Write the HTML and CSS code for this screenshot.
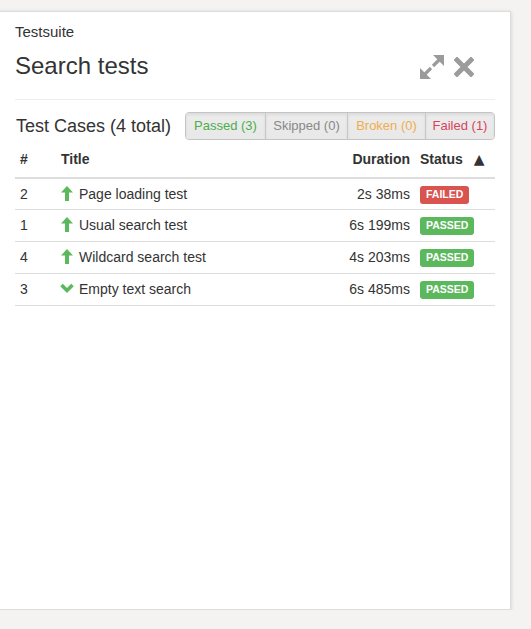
FILE: index.html
```html
<!DOCTYPE html>
<html>
<head>
<meta charset="utf-8">
<link rel="stylesheet" href="styles.css">
</head>
<body>
<div class="panel">
  <div class="head">
    <div class="head-text">
      <div class="suite">Testsuite</div>
      <div class="title">Search tests</div>
    </div>
    <div class="head-icons">
      <svg class="ic-expand" width="24" height="24" viewBox="0 0 24 24">
        <polygon points="13,0 24,0 24,11" fill="#9b9b9b"/>
        <line x1="19.5" y1="4.5" x2="13" y2="11" stroke="#9b9b9b" stroke-width="3.2"/>
        <polygon points="0,13 0,24 11,24" fill="#9b9b9b"/>
        <line x1="4.5" y1="19.5" x2="11" y2="13" stroke="#9b9b9b" stroke-width="3.2"/>
      </svg>
      <svg class="ic-close" width="20" height="20" viewBox="0 0 20 20">
        <path d="M3 3 L17 17 M17 3 L3 17" stroke="#9b9b9b" stroke-width="5" stroke-linecap="square"/>
      </svg>
    </div>
  </div>
  <div class="sep"></div>
  <div class="toolbar">
    <div class="tc-title">Test Cases (4 total)</div>
    <div class="btn-group">
      <span class="btn passed">Passed (3)</span>
      <span class="btn skipped">Skipped (0)</span>
      <span class="btn broken">Broken (0)</span>
      <span class="btn failed">Failed (1)</span>
    </div>
  </div>
  <table class="tbl">
    <thead>
      <tr>
        <th class="c-num">#</th>
        <th class="c-title">Title</th>
        <th class="c-dur">Duration</th>
        <th class="c-status">Status <span class="sort">▲</span></th>
      </tr>
    </thead>
    <tbody>
      <tr>
        <td class="c-num">2</td>
        <td class="c-title"><svg class="arrow" width="12" height="15" viewBox="0 0 12 15"><polygon points="6,0 12,6.5 8,6.5 8,15 4,15 4,6.5 0,6.5" fill="#5cb85c"/></svg>Page loading test</td>
        <td class="c-dur">2s 38ms</td>
        <td class="c-status"><span class="label l-failed">FAILED</span></td>
      </tr>
      <tr>
        <td class="c-num">1</td>
        <td class="c-title"><svg class="arrow" width="12" height="15" viewBox="0 0 12 15"><polygon points="6,0 12,6.5 8,6.5 8,15 4,15 4,6.5 0,6.5" fill="#5cb85c"/></svg>Usual search test</td>
        <td class="c-dur">6s 199ms</td>
        <td class="c-status"><span class="label l-passed">PASSED</span></td>
      </tr>
      <tr>
        <td class="c-num">4</td>
        <td class="c-title"><svg class="arrow" width="12" height="15" viewBox="0 0 12 15"><polygon points="6,0 12,6.5 8,6.5 8,15 4,15 4,6.5 0,6.5" fill="#5cb85c"/></svg>Wildcard search test</td>
        <td class="c-dur">4s 203ms</td>
        <td class="c-status"><span class="label l-passed">PASSED</span></td>
      </tr>
      <tr>
        <td class="c-num">3</td>
        <td class="c-title"><svg class="chev" width="14" height="15" viewBox="0 0 14 15"><polyline points="1.5,4 7,9.5 12.5,4" fill="none" stroke="#5cb85c" stroke-width="3.6"/></svg>Empty text search</td>
        <td class="c-dur">6s 485ms</td>
        <td class="c-status"><span class="label l-passed">PASSED</span></td>
      </tr>
    </tbody>
  </table>
</div>
</body>
</html>
```

FILE: styles.css
```css
html, body {
  margin: 0;
  padding: 0;
}
body {
  background: #f4f3f1;
  font-family: "Liberation Sans", Arial, sans-serif;
  color: #333;
  font-size: 14px;
  line-height: 20px;
}
.panel {
  box-sizing: border-box;
  margin: 11px 0 0 -1px;
  width: 512px;
  height: 599px;
  background: #fff;
  border: 1px solid #dcdcdc;
  box-shadow: 0 1px 4px rgba(0, 0, 0, 0.15);
  padding: 10px 15px 0 15px;
}
.head {
  display: flex;
  justify-content: space-between;
  align-items: flex-start;
}
.suite {
  font-size: 15px;
  line-height: 20px;
}
.title {
  font-size: 24px;
  line-height: 30px;
  margin-top: 9px;
}
.head-icons {
  display: flex;
  align-items: flex-start;
  gap: 10px;
  margin-top: 33px;
  margin-right: 21px;
}
.ic-close {
  margin-top: 2px;
}
.sep {
  height: 1px;
  background: #eee;
  margin-top: 18px;
}
.toolbar {
  display: flex;
  align-items: center;
  margin-top: 12px;
  height: 28px;
}
.tc-title {
  font-size: 18px;
  line-height: 28px;
  margin-left: 1px;
  width: 169px;
  white-space: nowrap;
}
.btn-group {
  display: flex;
  border: 1px solid #c4c4c4;
  border-radius: 4px;
  overflow: hidden;
  height: 26px;
}
.btn {
  font-size: 13px;
  line-height: 26px;
  padding: 0;
  white-space: nowrap;
  background: linear-gradient(#ececec, #e8e8e8);
  box-shadow: inset 0 2px 3px rgba(0, 0, 0, 0.07);
  border-left: 1px solid #c8c8c8;
  box-sizing: border-box;
  text-align: center;
}
.btn:first-child {
  border-left: 0;
}
.passed { color: #4cae4c; width: 79px; }
.skipped { color: #888; width: 82px; }
.broken { color: #f0ad4e; width: 78px; }
.failed { color: #d9435a; width: 69px; }

.tbl {
  width: 480px;
  border-collapse: collapse;
  margin-top: 1px;
}
.tbl th {
  font-weight: bold;
  text-align: left;
  padding: 8px 5px;
  border-bottom: 2px solid #ddd;
  height: 20px;
  white-space: nowrap;
}
.tbl td {
  padding: 5px 5px 6px 5px;
  border-bottom: 1px solid #ddd;
  height: 20px;
  white-space: nowrap;
}
.tbl tbody tr:first-child td {
  padding-bottom: 5px;
}
.c-num { width: 31px; }
.c-dur { text-align: right; width: 90px; }
.tbl th.c-dur { text-align: right; }
.c-status { width: 70px; }
.sort {
  font-family: "DejaVu Sans", sans-serif;
  font-size: 14px;
  margin-left: 7px;
}
.arrow, .chev {
  vertical-align: -2px;
  margin-right: 6px;
}
.chev {
  margin-left: -1px;
  margin-right: 5px;
}
.label {
  display: inline-block;
  font-size: 10.5px;
  font-weight: bold;
  line-height: 13px;
  padding: 2px 6px 3px;
  border-radius: 3px;
  color: #fff;
  vertical-align: 1px;
}
.l-failed { background: #d9534f; }
.l-passed { background: #5cb85c; }
```
